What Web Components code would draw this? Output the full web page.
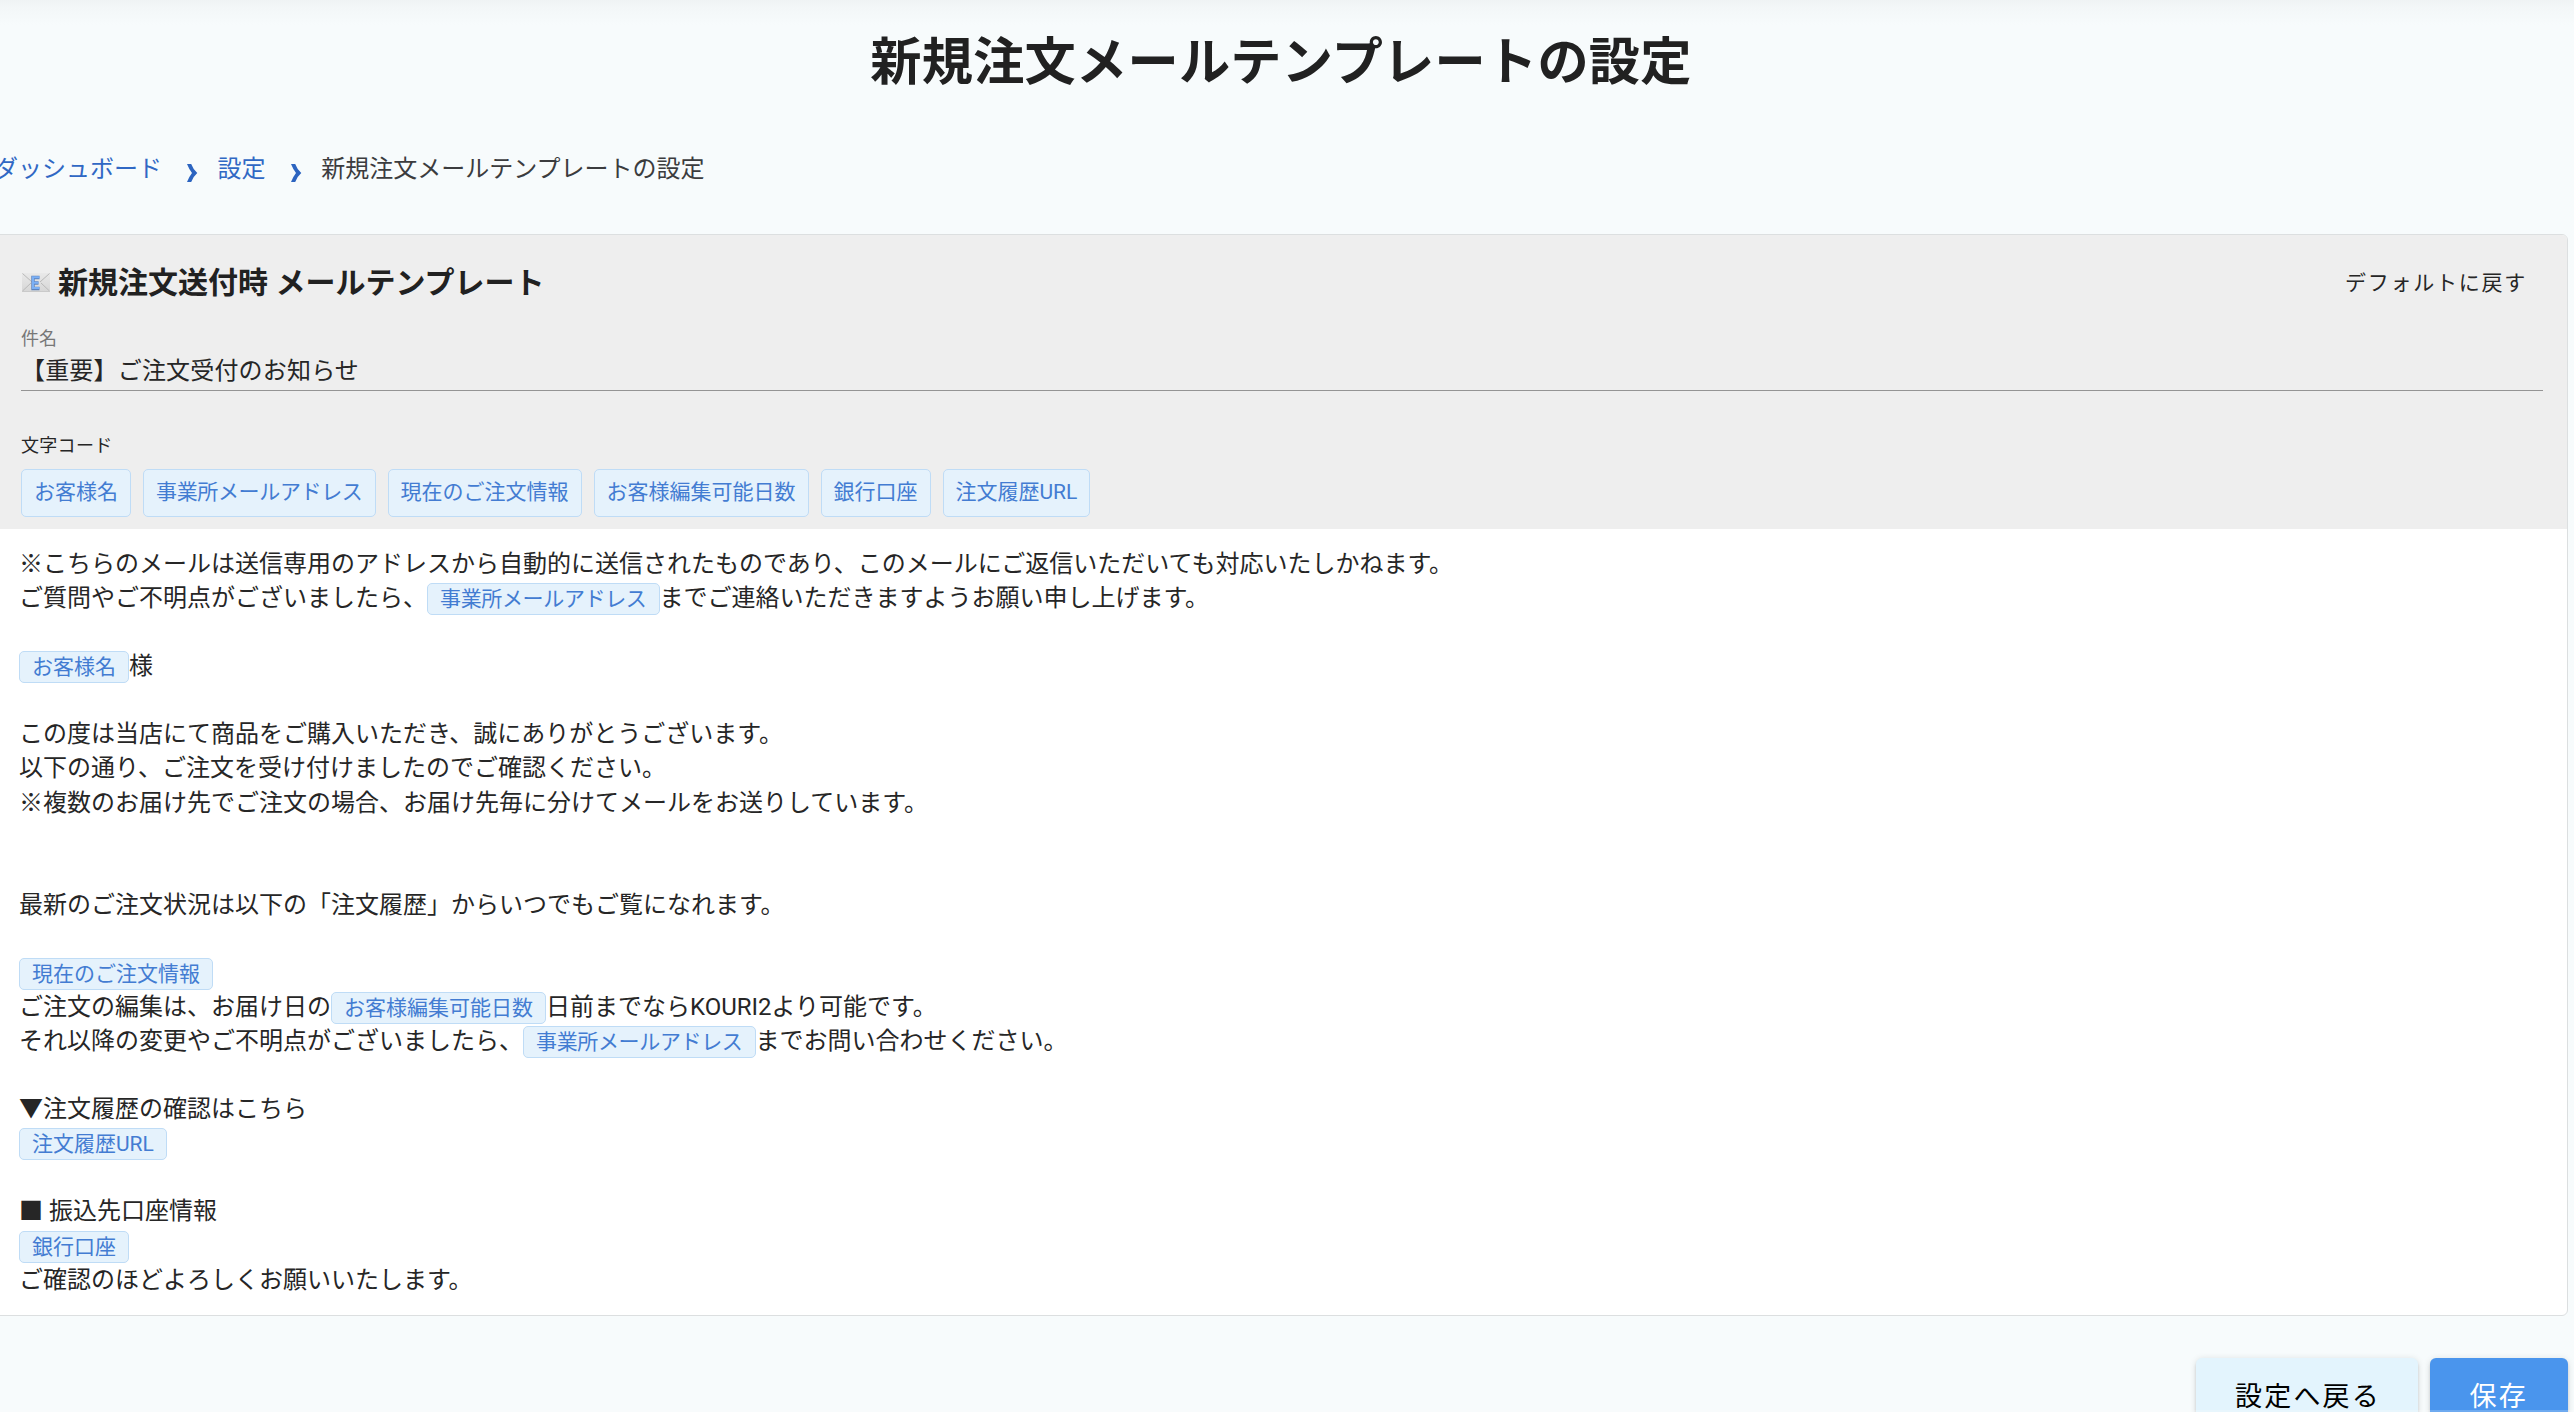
<!DOCTYPE html>
<html lang="ja">
<head>
<meta charset="utf-8">
<title>新規注文メールテンプレートの設定</title>
<style>
  html, body {
    margin: 0;
    height: 100%;
    overflow: hidden;
  }
  body {
    background: #f7fbfc;
    color: #262626;
    font-family: Roboto, "Noto Sans CJK JP", sans-serif;
    font-size: 24px;
  }
</style>
</head>
<body>
<settings-page>
  <bread-crumbs slot="nav">
    <bread-item link>ダッシュボード</bread-item>
    <bread-item link>設定</bread-item>
    <bread-item>新規注文メールテンプレートの設定</bread-item>
  </bread-crumbs>

  <template-card>
    <span slot="title">新規注文送付時 メールテンプレート</span>
    <span slot="action">デフォルトに戻す</span>
    <text-field slot="fields" label="件名">【重要】ご注文受付のお知らせ</text-field>
    <chip-list slot="fields" label="文字コード">
      <code-chip tall>お客様名</code-chip>
      <code-chip tall tight>事業所メールアドレス</code-chip>
      <code-chip tall>現在のご注文情報</code-chip>
      <code-chip tall>お客様編集可能日数</code-chip>
      <code-chip tall>銀行口座</code-chip>
      <code-chip tall>注文履歴URL</code-chip>
    </chip-list>

    <mail-line>※こちらのメールは送信専用のアドレスから自動的に送信されたものであり、このメールにご返信いただいても対応いたしかねます。</mail-line>
    <mail-line>ご質問やご不明点がございましたら、<code-chip tight>事業所メールアドレス</code-chip>までご連絡いただきますようお願い申し上げます。</mail-line>
    <mail-line></mail-line>
    <mail-line><code-chip>お客様名</code-chip>様</mail-line>
    <mail-line></mail-line>
    <mail-line>この度は当店にて商品をご購入いただき、誠にありがとうございます。</mail-line>
    <mail-line>以下の通り、ご注文を受け付けましたのでご確認ください。</mail-line>
    <mail-line>※複数のお届け先でご注文の場合、お届け先毎に分けてメールをお送りしています。</mail-line>
    <mail-line></mail-line>
    <mail-line></mail-line>
    <mail-line>最新のご注文状況は以下の「注文履歴」からいつでもご覧になれます。</mail-line>
    <mail-line></mail-line>
    <mail-line><code-chip>現在のご注文情報</code-chip></mail-line>
    <mail-line>ご注文の編集は、お届け日の<code-chip>お客様編集可能日数</code-chip>日前までならKOURI2より可能です。</mail-line>
    <mail-line>それ以降の変更やご不明点がございましたら、<code-chip tight>事業所メールアドレス</code-chip>までお問い合わせください。</mail-line>
    <mail-line></mail-line>
    <mail-line>▼注文履歴の確認はこちら</mail-line>
    <mail-line><code-chip>注文履歴URL</code-chip></mail-line>
    <mail-line></mail-line>
    <mail-line>■ 振込先口座情報</mail-line>
    <mail-line><code-chip>銀行口座</code-chip></mail-line>
    <mail-line>ご確認のほどよろしくお願いいたします。</mail-line>
  </template-card>

  <push-button slot="actions">設定へ戻る</push-button>
  <push-button slot="actions" primary>保存</push-button>
</settings-page>

<script>
// attach an open shadow root filled from a template
function define(name, html) {
  const template = document.createElement("template");
  template.innerHTML = html;

  customElements.define(name, class extends HTMLElement {
    constructor() {
      super();
      this.attachShadow({ mode: "open" });
      this.shadowRoot.appendChild(template.content.cloneNode(true));
    }

    connectedCallback() {
      const $label = this.shadowRoot.querySelector(".label");
      if ($label) {
        $label.textContent = this.getAttribute("label");
      }
    }
  });
}

define("settings-page", /* html */ `
<style>
  :host {
    display: block;
    height: 100%;
    overflow: hidden;
    background: linear-gradient(#eff3f4, #f3f7f8 8px, rgba(247, 251, 252, 0) 25px);
  }
  .page {
    width: 2574px;
    margin-left: -6px;
  }
  h1 {
    margin: 0;
    padding-top: 25px;
    color: #212121;
    font-size: 51.2px;
    line-height: 76px;
    font-weight: 700;
    letter-spacing: 0.25px;
    text-align: center;
  }
  .actions {
    display: flex;
    justify-content: flex-end;
    gap: 12px;
    padding-top: 42px;
  }
  /* thin translucent edge along the bottom of the window */
  .edge {
    position: fixed;
    left: 0;
    right: 0;
    bottom: 0;
    height: 2px;
    background: rgba(255, 255, 255, 0.2);
  }
</style>
<div class="page">
  <h1>新規注文メールテンプレートの設定</h1>
  <slot name="nav"></slot>
  <slot></slot>
  <div class="actions"><slot name="actions"></slot></div>
</div>
<div class="edge"></div>
`);

define("bread-crumbs", /* html */ `
<style>
  :host {
    display: flex;
    padding: 50px 0 47px;
    height: 36px;
    line-height: 36px;
  }
</style>
<slot></slot>
`);

define("bread-item", /* html */ `
<style>
  :host {
    display: flex;
    color: #3b3c3e;
    white-space: nowrap;
  }
  :host([link]) {
    color: #3068c4;
  }
  .sep {
    display: none;
    width: 55.6px;
    box-sizing: border-box;
    padding: 13px 0 0 24px;
  }
  :host([link]) .sep {
    display: block;
  }
  svg {
    display: block;
  }
</style>
<slot></slot>
<span class="sep">
  <svg width="12" height="18" viewBox="0 0 12 18"><path d="M1 0H5.2Q7.2 5.5 11.300 9Q7.2 12.500 5.200 18H1Q3.200 12.500 6 9Q3.200 5.500 1 0Z" fill="#2c64c0"/></svg>
</span>
`);

define("template-card", /* html */ `
<style>
  :host {
    display: block;
    box-sizing: border-box;
    height: 1082px;
    border: 1px solid #dcdfe0;
    border-radius: 6px;
    background: #fff;
    overflow: hidden;
  }
  .head {
    box-sizing: border-box;
    height: 294px;
    padding: 24px 24px 0 26px;
    background: #eee;
  }
  .bar {
    display: flex;
    align-items: center;
    height: 46px;
  }
  .bar svg {
    margin-right: 7px;
  }
  .title {
    flex: 1;
    padding-bottom: 4px;
    color: #212121;
    font-size: 30px;
    font-weight: 700;
  }
  .action {
    padding: 0 16px 3px 0;
    font-size: 21px;
    letter-spacing: 1.75px;
  }
  .body {
    padding: 18px 24px 0;
  }
</style>
<div class="head">
  <div class="bar">
    <svg width="30" height="22" viewBox="0 0 30 22">
      <defs>
        <linearGradient id="paper" x1="0" y1="0" x2="0" y2="1">
          <stop offset="0" stop-color="#e9e9e9"/>
          <stop offset="1" stop-color="#d6d6d6"/>
        </linearGradient>
      </defs>
      <rect x="1" y="2" width="28" height="19" fill="url(#paper)"/>
      <path d="M1.500 2.500L11 11M28.500 2.500L19 11M1.500 20L10 12M28.500 20L20 12" fill="none" stroke="#b9b9b9" stroke-width="1"/>
      <path d="M1 20.500H29" stroke="#cacaca"/>
      <path d="M18.500 6.500H12V17.500H18.500M12 12H17.500" fill="none" stroke="#5d83bd" stroke-width="3.400"/>
      <path d="M18.500 6.300H12V17H18.500M12 11.700H17.500" fill="none" stroke="#7bb0f5" stroke-width="2"/>
    </svg>
    <div class="title"><slot name="title"></slot></div>
    <div class="action"><slot name="action"></slot></div>
  </div>
  <slot name="fields"></slot>
</div>
<div class="body"><slot></slot></div>
`);

define("text-field", /* html */ `
<style>
  :host {
    display: block;
    padding-top: 21px;
  }
  .label {
    color: #777;
    font-size: 18px;
    line-height: 26px;
  }
  .value {
    height: 38px;
    line-height: 38px;
    letter-spacing: 0.18px;
    border-bottom: 1px solid #949494;
  }
</style>
<div class="label"></div>
<div class="value"><slot></slot></div>
`);

define("chip-list", /* html */ `
<style>
  :host {
    display: block;
    padding-top: 42px;
  }
  .label {
    font-size: 18px;
    line-height: 26px;
    letter-spacing: 0.3px;
  }
  .chips {
    display: flex;
    gap: 12px;
    padding-top: 10px;
  }
</style>
<div class="label"></div>
<div class="chips"><slot></slot></div>
`);

define("code-chip", /* html */ `
<style>
  :host {
    display: inline-block;
    box-sizing: border-box;
    height: 32px;
    margin: -6px 0;
    padding: 0 12px;
    border: 1px solid #bfdcf6;
    border-radius: 5px;
    background: #e5f2fc;
    color: #437cd2;
    font-size: 21px;
    line-height: 30px;
    white-space: nowrap;
  }
  :host([tall]) {
    height: 48px;
    margin: 0;
    line-height: 44px;
  }
  :host([tight]) {
    letter-spacing: -0.35px;
  }
</style>
<slot></slot>
`);

define("mail-line", /* html */ `
<style>
  :host {
    display: block;
    height: 34.080px;
    line-height: 34.080px;
    white-space: nowrap;
  }
</style>
<slot></slot>
`);

define("push-button", /* html */ `
<style>
  :host {
    display: block;
    box-sizing: border-box;
    width: 222.500px;
    height: 78px;
    padding-left: 39.500px;
    border-radius: 6px;
    background: #e3f4fd;
    color: #000;
    font-size: 27px;
    line-height: 79px;
    letter-spacing: 2.200px;
    white-space: nowrap;
    box-shadow: 0 4px 2px -3px rgba(0, 0, 0, 0.2), 0 3px 3px rgba(0, 0, 0, 0.14), 0 1px 7px rgba(0, 0, 0, 0.12);
  }
  :host([primary]) {
    width: 138px;
    background: #4a95ed;
    color: #fff;
  }
</style>
<slot></slot>
`);
</script>
</body>
</html>
